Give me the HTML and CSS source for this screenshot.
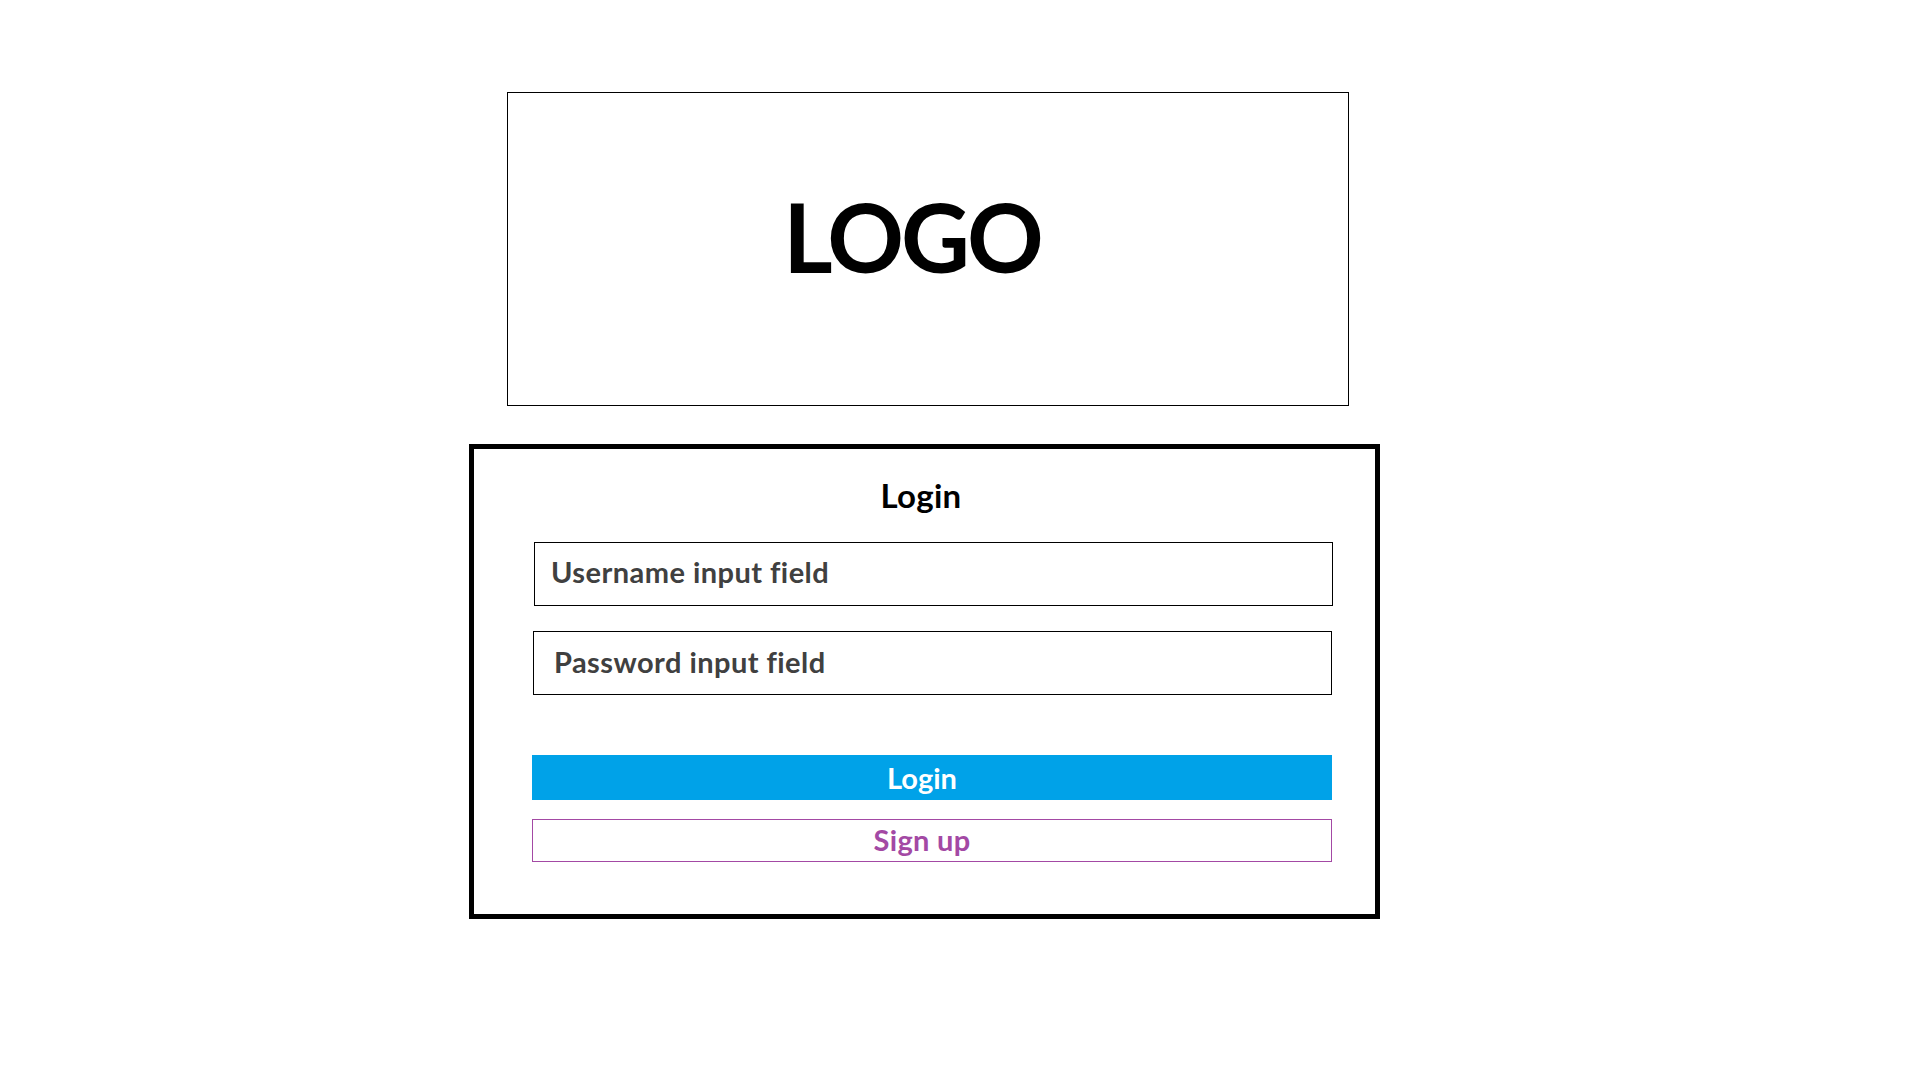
FILE: index.html
```html
<!DOCTYPE html>
<html lang="en">
<head>
<meta charset="utf-8">
<title>Login</title>
<link rel="stylesheet" href="styles.css">
</head>
<body>
<div class="page">
  <div class="logo-box"><span class="logo-text">LOGO</span></div>
  <div class="card">
    <div class="card-title">Login</div>
    <div class="field field-user">Username input field</div>
    <div class="field field-pass">Password input field</div>
    <div class="btn btn-login">Login</div>
    <div class="btn btn-signup">Sign up</div>
  </div>
</div>
</body>
</html>
```
FILE: styles.css
```css
html, body {
  margin: 0;
  padding: 0;
  background: #ffffff;
}
body {
  font-family: "Lato", "Open Sans", sans-serif;
  font-weight: 700;
  color: #000;
  font-variant-ligatures: none;
}
.page {
  display: flex;
  flex-direction: column;
  align-items: flex-start;
  padding-top: 92px;
}
.logo-box {
  box-sizing: border-box;
  margin-left: 507px;
  width: 842px;
  height: 314px;
  border: 1px solid #000;
  display: flex;
  align-items: center;
  justify-content: center;
  padding: 0 32px 25px 0;
}
.logo-text {
  font-size: 95px;
  line-height: 1;
  letter-spacing: -3px;
}
.card {
  box-sizing: border-box;
  margin-top: 38px;
  margin-left: 469px;
  width: 911px;
  height: 475px;
  border: 5px solid #000;
  display: flex;
  flex-direction: column;
  align-items: flex-start;
  padding: 26px 0 0 59px;
}
.card-title {
  width: 800px;
  text-align: center;
  font-size: 33px;
  line-height: 40px;
  padding-right: 24px;
  box-sizing: border-box;
  letter-spacing: 0.3px;
}
.field {
  box-sizing: border-box;
  width: 799px;
  height: 64px;
  border: 1px solid #000;
  color: #404040;
  font-size: 29px;
  line-height: 36px;
  letter-spacing: 0.45px;
  display: flex;
  align-items: center;
}
.field-user {
  margin-top: 27px;
  margin-left: 1px;
  padding-left: 16px;
  padding-bottom: 5px;
}
.field-pass {
  margin-top: 25px;
  padding-left: 20px;
  padding-bottom: 3px;
}
.btn {
  box-sizing: border-box;
  width: 800px;
  margin-left: -1px;
  display: flex;
  align-items: center;
  justify-content: center;
  font-size: 29px;
  line-height: 36px;
  padding-right: 20px;
}
.btn-login {
  margin-top: 60px;
  height: 45px;
  background: #00a2e8;
  color: #ffffff;
}
.btn-signup {
  margin-top: 19px;
  height: 43px;
  border: 1px solid #a349a4;
  color: #a349a4;
  letter-spacing: 0.3px;
  padding-bottom: 2px;
}
```
